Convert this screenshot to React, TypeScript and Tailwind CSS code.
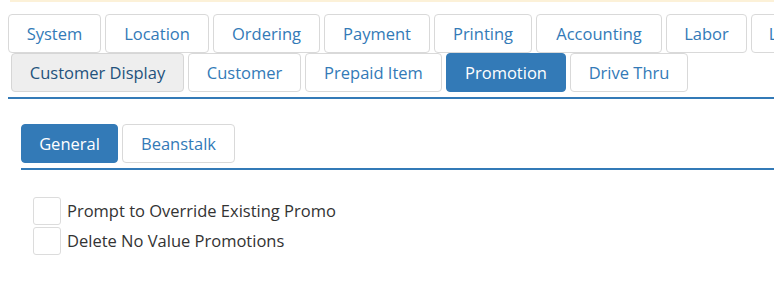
import React from "react";

const row1 = [
  { label: "System", w: "w-[93px]" },
  { label: "Location", w: "w-[104px]" },
  { label: "Ordering", w: "w-[107px]" },
  { label: "Payment", w: "w-[106px]" },
  { label: "Printing", w: "w-[98px]" },
  { label: "Accounting", w: "w-[126px]" },
  { label: "Labor", w: "w-[81px]" },
  { label: "Loyalty", w: "w-[90px]" },
];

const row2 = [
  { label: "Customer Display", w: "w-[173px]", kind: "gray" },
  { label: "Customer", w: "w-[113px]", kind: "plain" },
  { label: "Prepaid Item", w: "w-[137px]", kind: "plain" },
  { label: "Promotion", w: "w-[120px]", kind: "active" },
  { label: "Drive Thru", w: "w-[118px]", kind: "plain" },
];

function Tab({ label, w, kind = "plain", h = "h-[39px]" }: { label: string; w: string; kind?: string; h?: string }) {
  const cls =
    kind === "active"
      ? "bg-[#337ab7] border-[#337ab7] text-white"
      : kind === "gray"
      ? "bg-[#eeeeee] border-[#d6d6d6] text-[#23527c]"
      : "bg-white border-[#d9d9d9] text-[#337ab7]";
  return (
    <div className={`${w} ${h} shrink-0 flex items-center justify-center pt-[2px] rounded-[4px] border ${cls}`}>
      {label}
    </div>
  );
}

function Check({ label }: { label: string }) {
  return (
    <div className="flex items-center h-[28px]">
      <div className="w-[28px] h-[28px] rounded-[3px] border border-[#dcdcdc] bg-white shrink-0" />
      <span className="ml-[6px] pt-[1px] text-[#333333]">{label}</span>
    </div>
  );
}

export default function App() {
  return (
    <div
      className="w-[774px] h-[282px] overflow-hidden bg-white text-[16.5px] leading-none"
      style={{ fontFamily: '"Open Sans", "Noto Sans", sans-serif' }}
    >
      <div className="ml-[10px] h-[2px] bg-[#fcf1d8]" />
      <div className="pl-[8px] pt-[12px]">
        <div className="flex gap-[4px]">
          {row1.map((t) => (
            <Tab key={t.label} label={t.label} w={t.w} />
          ))}
        </div>
        <div className="flex gap-[4px] ml-[3px] mt-[0px]">
          {row2.map((t) => (
            <Tab key={t.label} label={t.label} w={t.w} kind={t.kind} />
          ))}
        </div>
        <div className="mt-[5px] h-[2px] bg-[#337ab7]" />
      </div>
      <div className="pl-[21px] pt-[25px]">
        <div className="flex gap-[4px]">
          <Tab label="General" w="w-[97px]" kind="active" />
          <Tab label="Beanstalk" w="w-[113px]" />
        </div>
        <div className="mt-[5px] h-[2px] bg-[#337ab7]" />
      </div>
      <div className="pl-[33px] pt-[27px] flex flex-col gap-[2px]">
        <Check label="Prompt to Override Existing Promo" />
        <Check label="Delete No Value Promotions" />
      </div>
    </div>
  );
}
